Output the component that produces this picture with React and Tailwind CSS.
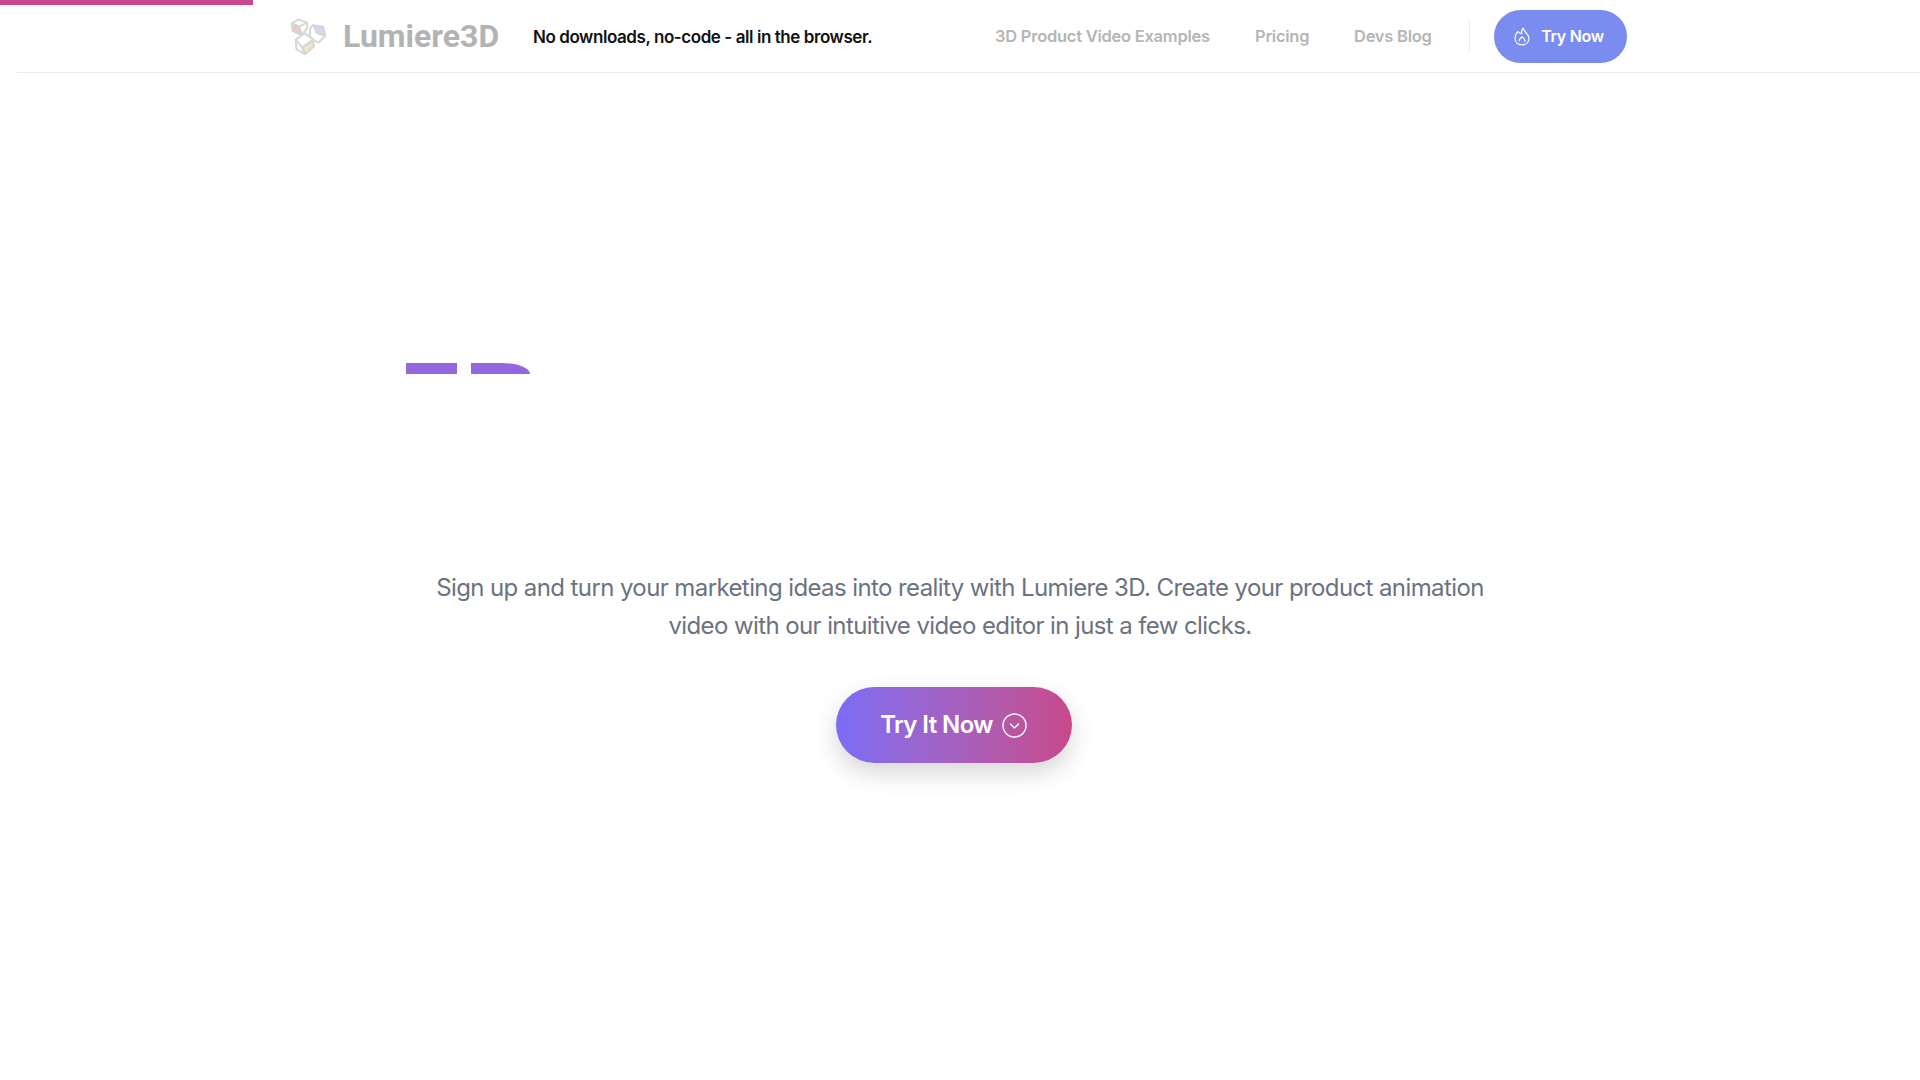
import React from "react";

function Logo() {
  return (
    <svg width="38" height="38" viewBox="0 0 40 40" fill="none" className="shrink-0">
      <g stroke="#d6d6d6" strokeWidth="2" strokeLinejoin="round" strokeLinecap="round">
        <path d="M3 7 L10 2.5 L19 6 L19 12 L13.5 19 L4 14.5 Z" fill="#fff" />
        <path d="M3 7 L11 10 L13.5 19 L4 14.5 Z" fill="#efc9c6" />
        <path d="M11 10 L19 6" />
        <path d="M22 13 L25 8.5 L36 10.5 L38 20 L31 27 L22 22 Z" fill="#fff" />
        <path d="M26 9 L36 10.5 L37.5 19.5 L29 17 Z" fill="#d3daf5" />
        <path d="M7 24 L16 17 L25 23 L26 31 L17 39 L8 34 Z" fill="#fff" />
        <path d="M14 32 L25 25 L26 31 L17 39 Z" fill="#f5e4c8" />
        <path d="M7 24 L14 32 L25 24 M14 32 L16 38" />
      </g>
    </svg>
  );
}

function Flame() {
  return (
    <svg width="16" height="19" viewBox="0 0 16 19" fill="none" stroke="#fff" strokeWidth="1.2" strokeLinecap="round" strokeLinejoin="round" className="shrink-0">
      <path d="M4 4.5 C2 6.5 1 8.5 1 11 C1 15.2 4 17.8 8 17.8 C12 17.8 15 15.2 15 11.2 C15 7.5 10.5 5.5 9 1 C7.8 2.8 7.4 5 7.8 6.6 C6.2 6.5 4.8 6 4 4.5 Z" />
      <path d="M5 14 C5 12 7.2 11.2 8 9.5 C9.2 11 11 12 11 14.2" />
    </svg>
  );
}

export default function App() {
  return (
    <div className="relative h-[1080px] w-[1920px] overflow-hidden bg-white font-['Inter','Liberation_Sans',sans-serif]">
      <div className="absolute left-0 top-0 h-[5px] w-[253px] bg-[#c9488f]" />

      <header className="ml-[17px] flex h-[73px] items-center border-b border-[#ececec] pl-[272px]">
        <Logo />
        <span className="ml-[16px] w-[156px] font-['Roboto',sans-serif] text-[32px] font-bold leading-none text-[#b3b3b3]">Lumiere3D</span>
        <span className="ml-[34px] w-[340px] whitespace-nowrap pt-[3px] text-[17px] font-semibold tracking-[-0.43px] text-[#111111]">No downloads, no-code - all in the browser.</span>
        <nav className="ml-[122px] flex items-center whitespace-nowrap text-[16.5px] font-semibold tracking-[-0.25px] text-[#b5b5b5]">
          <a className="w-[216px]">3D Product Video Examples</a>
          <a className="ml-[44px] w-[57px]">Pricing</a>
          <a className="ml-[42px] w-[77px]">Devs Blog</a>
        </nav>
        <div className="ml-[38px] h-[32px] w-px bg-[#ececec]" />
        <button className="ml-[24px] flex h-[53px] w-[133px] items-center justify-center gap-[11px] rounded-full bg-[#7b8cf0] pr-[3px] text-[16px] font-semibold tracking-[-0.3px] text-white">
          <Flame />
          Try Now
        </button>
      </header>

      <main className="flex flex-col items-center">
        <div className="flex h-[301px] w-full items-end pl-[406px]">
          <div className="flex gap-[14px]">
            <div className="h-[11px] w-[51px] bg-[#9267e0]" />
            <div className="h-[11px] w-[59px] rounded-tr-[28px_11px] bg-[#9267e0]" />
          </div>
        </div>
        <p className="mt-[195px] w-[1100px] whitespace-nowrap text-center text-[24px] font-normal leading-[38px] tracking-[-0.6px] text-[#6b7280]">
          Sign up and turn your marketing ideas into reality with Lumiere 3D. Create your product animation
          <br />
          video with our intuitive video editor in just a few clicks.
        </p>
        <button className="ml-[-13px] mt-[42px] flex h-[76px] w-[236px] items-center justify-center gap-[9px] rounded-full bg-gradient-to-r from-[#7c6cf5] to-[#c8488a] text-[24px] font-semibold tracking-[-0.6px] text-white shadow-[0_10px_24px_rgba(0,0,0,0.16)]">
          Try It Now
          <svg width="25" height="25" viewBox="0 0 25 25" fill="none" stroke="#fff" strokeWidth="1.4" strokeLinecap="round" strokeLinejoin="round">
            <circle cx="12.5" cy="12.5" r="11.5" />
            <path d="M8.5 11 L12.5 15 L16.5 11" />
          </svg>
        </button>
      </main>
    </div>
  );
}
